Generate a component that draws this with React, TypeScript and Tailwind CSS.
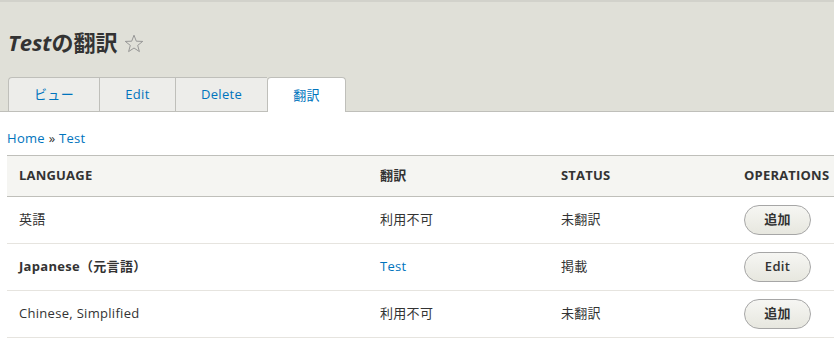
import React from "react";

const rows = [
  { lang: "英語", bold: false, tr: "利用不可", link: false, status: "未翻訳", op: "追加" },
  { lang: "Japanese（元言語）", bold: true, tr: "Test", link: true, status: "掲載", op: "Edit" },
  { lang: "Chinese, Simplified", bold: false, tr: "利用不可", link: false, status: "未翻訳", op: "追加" },
];

function Star() {
  return (
    <svg width="20" height="19" viewBox="0 0 20 19" className="ml-[7px] mt-[2px]">
      <path
        d="M10 1.2 L12.3 7.2 L18.7 7.4 L13.7 11.4 L15.4 17.6 L10 14 L4.6 17.6 L6.3 11.4 L1.3 7.4 L7.7 7.2 Z"
        fill="none"
        stroke="#8f8f8f"
        strokeWidth="0.9"
        strokeLinejoin="round"
      />
    </svg>
  );
}

export default function App() {
  return (
    <div className="w-[834px] h-[346px] overflow-hidden bg-white text-[#333] text-[13px] tracking-[0.3px] font-['Open_Sans','Noto_Sans_CJK_JP',sans-serif]">
      <div className="bg-[#e0e0d8] border-t-2 border-[#d2d2cb] border-b border-b-[#bfbfba] px-[8px]">
        <div className="h-[55px] pt-[25px] flex items-center">
          <h1 className="text-[22px] font-bold leading-[30px] tracking-normal text-[#333] flex items-center">
            <em className="italic">Test</em>
            <span>の翻訳</span>
          </h1>
          <Star />
        </div>
        <ul className="flex mt-[20px] -mb-px">
          <li className="w-[91px] h-[35px] pt-px flex items-center justify-center bg-[#ededea] border-l border-t border-b border-[#bfbfba] rounded-tl-[4px] text-[#0074bd]">
            ビュー
          </li>
          <li className="w-[76px] h-[35px] pt-px flex items-center justify-center bg-[#ededea] border-l border-t border-b border-[#bfbfba] text-[#0074bd]">
            Edit
          </li>
          <li className="w-[92px] h-[35px] pt-px flex items-center justify-center bg-[#ededea] border-l border-t border-b border-[#bfbfba] text-[#0074bd]">
            Delete
          </li>
          <li className="w-[79px] h-[35px] pt-px flex items-center justify-center bg-white border-l border-t border-r border-[#bfbfba] rounded-t-[4px] text-[#0074bd]">
            翻訳
          </li>
        </ul>
      </div>
      <div className="px-[7px] pt-[16px] leading-[20px]">
        <span className="text-[#0074bd]">Home</span>
        <span className="text-[#333]"> » </span>
        <span className="text-[#0074bd]">Test</span>
      </div>
      <div className="ml-[7px] mt-[7px] w-[860px] border-t border-[#bfbfba]">
        <div className="grid grid-cols-[362px_181px_183px_1fr] h-[41px] items-center bg-[#f5f5f2] border-b border-[#bfbfba] text-[13px] tracking-[0.2px] font-bold uppercase text-[#333]">
          <div className="px-[12px]">Language</div>
          <div className="px-[11px]">翻訳</div>
          <div className="px-[11px]">Status</div>
          <div className="px-[11px]">Operations</div>
        </div>
        {rows.map((r, i) => (
          <div
            key={i}
            className="grid grid-cols-[362px_181px_183px_1fr] h-[47px] items-center border-b border-[#e6e4df]"
          >
            <div className={"px-[12px] " + (r.bold ? "font-bold" : "")}>{r.lang}</div>
            <div className={"px-[11px] " + (r.link ? "text-[#0074bd]" : "")}>{r.tr}</div>
            <div className="px-[11px]">{r.status}</div>
            <div className="px-[11px]">
              <button className="w-[67px] h-[30px] rounded-full border border-[#a6a6a6] bg-gradient-to-b from-[#f6f6f3] to-[#e7e7df] font-semibold text-[13px] text-[#333] flex items-center justify-center">
                {r.op}
              </button>
            </div>
          </div>
        ))}
      </div>
    </div>
  );
}
